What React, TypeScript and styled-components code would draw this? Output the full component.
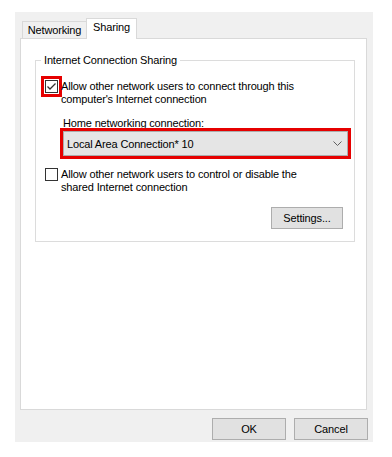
import styled, { createGlobalStyle } from "styled-components";

const GlobalStyle = createGlobalStyle`
  body {
    margin: 0;
    background: #fff;
    font-family: "Liberation Sans", Arial, sans-serif;
    font-size: 11px;
    letter-spacing: -0.15px;
    color: #000;
  }
`;

const Dialog = styled.div`
  margin: 12px 0 0 15px;
  width: 358px;
  height: 430px;
  box-sizing: border-box;
  padding: 6px 6px 2px 5px;
  background: #f0f0f0;
  display: flex;
  flex-direction: column;
`;

const TabStrip = styled.div`
  display: flex;
  align-items: flex-end;
  height: 20px;
  margin-left: 2px;
  position: relative;
  z-index: 1;
`;

const Tab = styled.div<{ $active?: boolean }>`
  box-sizing: border-box;
  width: ${(p) => (p.$active ? 51 : 64)}px;
  height: ${(p) => (p.$active ? 21 : 17)}px;
  margin-bottom: ${(p) => (p.$active ? -1 : 0)}px;
  padding-top: 2px;
  line-height: 13px;
  text-align: center;
  border: 1px solid #d9d9d9;
  border-bottom: none;
  border-right: ${(p) => (p.$active ? "1px solid #d9d9d9" : "none")};
  background: ${(p) => (p.$active ? "#fff" : "#f0f0f0")};
`;

const Panel = styled.div`
  box-sizing: border-box;
  width: 347px;
  height: 372px;
  border: 1px solid #d9d9d9;
  background: #fff;
  padding: 15px 0 0 14px;
`;

const Group = styled.fieldset`
  box-sizing: border-box;
  width: 320px;
  margin: 0;
  padding: 13px 6px 12px 9px;
  border: 1px solid #dcdcdc;
  min-inline-size: 0;
`;

const Legend = styled.legend`
  padding: 0 3px;
  margin-left: -4px;
  line-height: 13px;
`;

const CheckRow = styled.label<{ $top?: number }>`
  display: flex;
  align-items: flex-start;
  gap: 3px;
  line-height: 13px;
  margin-top: ${(p) => p.$top ?? 0}px;
`;

const Box = styled.span<{ $highlight?: boolean }>`
  flex: none;
  width: 13px;
  height: 13px;
  box-sizing: border-box;
  border: 1px solid #333;
  background: #fff;
  display: flex;
  align-items: center;
  justify-content: center;
  ${(p) => p.$highlight && "outline: 3px solid #e60000; outline-offset: 1px;"}
`;

const Field = styled.div`
  margin: 11px 0 0 18px;
`;

const FieldLabel = styled.div`
  line-height: 13px;
`;

const Combo = styled.div`
  box-sizing: border-box;
  margin-top: 1px;
  width: 285px;
  height: 25px;
  border: 1px solid #acacac;
  background: #e5e5e5;
  outline: 3px solid #e60000;
  display: flex;
  align-items: center;
  justify-content: space-between;
  padding: 0 5px 0 3px;
`;

const ButtonRow = styled.div<{ $top: number; $right: number }>`
  display: flex;
  justify-content: flex-end;
  gap: 8px;
  margin-top: ${(p) => p.$top}px;
  margin-right: ${(p) => p.$right}px;
`;

const Button = styled.button<{ $w: number }>`
  box-sizing: border-box;
  width: ${(p) => p.$w}px;
  height: 22px;
  padding: 0;
  border: 1px solid #adadad;
  background: #e1e1e1;
  font-family: inherit;
  font-size: 11px;
  letter-spacing: inherit;
  color: #000;
`;

function CheckMark() {
  return (
    <svg width="11" height="11" viewBox="0 0 11 11">
      <polyline points="1.5,5.5 4,8 9.5,2.5" fill="none" stroke="#333" strokeWidth="1.3" />
    </svg>
  );
}

function Chevron() {
  return (
    <svg width="9" height="5" viewBox="0 0 9 5">
      <polyline points="0.5,0.5 4.5,4.5 8.5,0.5" fill="none" stroke="#606060" strokeWidth="1" />
    </svg>
  );
}

export default function App() {
  return (
    <>
      <GlobalStyle />
      <Dialog>
        <TabStrip>
          <Tab>Networking</Tab>
          <Tab $active>Sharing</Tab>
        </TabStrip>
        <Panel>
          <Group>
            <Legend>Internet Connection Sharing</Legend>
            <CheckRow>
              <Box $highlight>
                <CheckMark />
              </Box>
              <span>
                Allow other network users to connect through this
                <br />
                computer's Internet connection
              </span>
            </CheckRow>
            <Field>
              <FieldLabel>Home networking connection:</FieldLabel>
              <Combo>
                <span>Local Area Connection* 10</span>
                <Chevron />
              </Combo>
            </Field>
            <CheckRow $top={12}>
              <Box />
              <span>
                Allow other network users to control or disable the
                <br />
                shared Internet connection
              </span>
            </CheckRow>
            <ButtonRow $top={13} $right={5}>
              <Button $w={72}>Settings...</Button>
            </ButtonRow>
          </Group>
        </Panel>
        <ButtonRow $top={8} $right={-1}>
          <Button $w={74}>OK</Button>
          <Button $w={74}>Cancel</Button>
        </ButtonRow>
      </Dialog>
    </>
  );
}
